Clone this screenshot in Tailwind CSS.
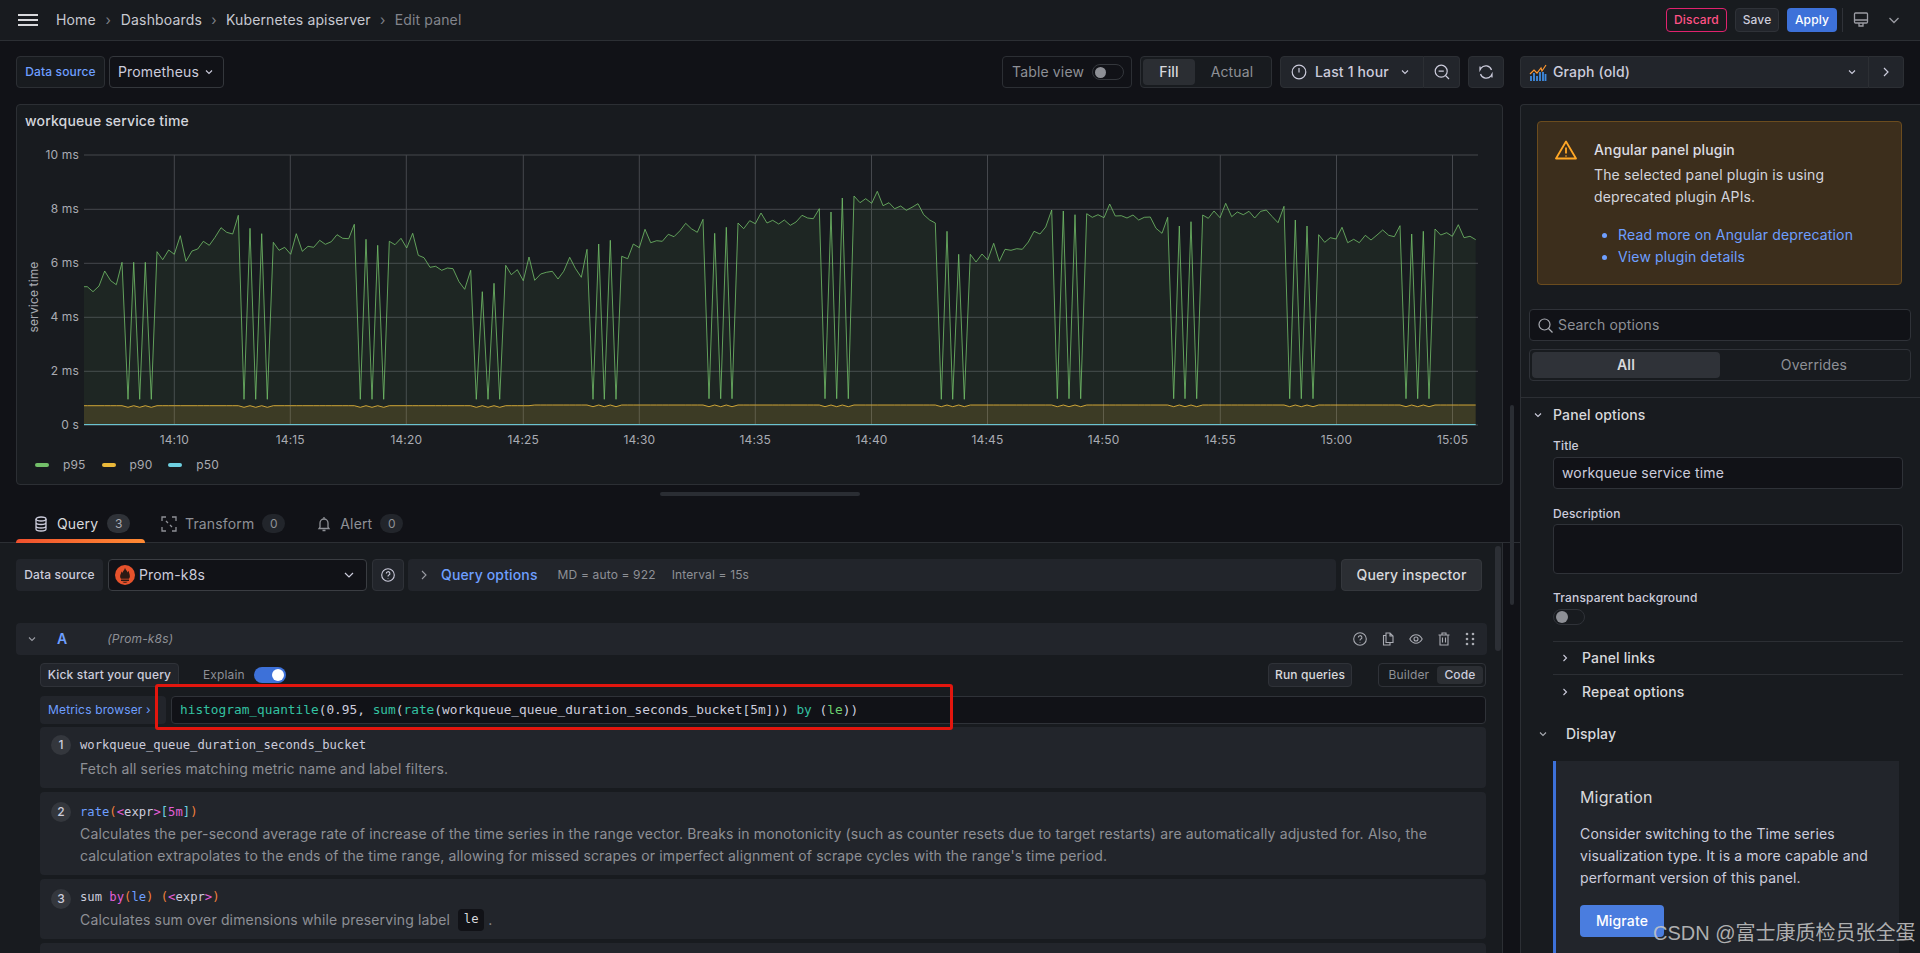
<!DOCTYPE html>
<html lang="en">
<head>
<meta charset="UTF-8">
<title>Edit panel - Grafana</title>
<script src="https://cdn.jsdelivr.net/npm/@tailwindcss/browser@4"></script>
</head>
<body class="w-[1920px] h-[953px] overflow-hidden bg-[#111217] text-[#ccccdc] text-sm tracking-[0.15px] font-['Inter',sans-serif] relative">

<!-- top bar -->
<header class="h-[41px] bg-[#181b1f] border-b border-[#2c2f34] flex items-center">
  <svg class="ml-[18px] w-5 h-3" viewBox="0 0 20 12" fill="none" stroke="#d8d9dc" stroke-width="2"><path d="M0 1h20M0 6h20M0 11h20"/></svg>
  <nav class="ml-[18px] flex items-center text-[#c7c9d1]">
    <span>Home</span><span class="w-[25px] text-center text-[#7e8087]">›</span>
    <span>Dashboards</span><span class="w-6 text-center text-[#7e8087]">›</span>
    <span>Kubernetes apiserver</span><span class="w-6 text-center text-[#7e8087]">›</span>
    <span class="text-[#83858c]">Edit panel</span>
  </nav>
  <div class="ml-auto flex items-center text-xs font-medium">
    <button class="w-[61px] h-6 border border-[#e0226e] rounded-sm text-[#ff5286]">Discard</button>
    <button class="ml-2 w-11 h-6 bg-[#22252b] border border-[#2f3238] rounded-sm">Save</button>
    <button class="ml-2 w-[50px] h-6 bg-[#3d71d9] rounded-sm text-white">Apply</button>
    <div class="ml-[5px] w-px h-6 bg-[#2f3238]"></div>
    <svg class="ml-[10px] w-4 h-4" viewBox="0 0 16 16" fill="none" stroke="#9a9ca3" stroke-width="1.3"><rect x="1.5" y="1" width="13" height="10" rx="1"/><path d="M1.5 8h13M6 11v3h4v-3"/></svg>
    <svg class="ml-[19px] mr-5 w-3 h-3" viewBox="0 0 12 12" fill="none" stroke="#9a9ca3" stroke-width="1.3"><path d="M1.5 4l4.5 4.5L10.5 4"/></svg>
  </div>
</header>

<div class="flex h-[912px]">
  <!-- left column -->
  <main class="w-[1520px] shrink-0 relative">
    <!-- toolbar -->
    <div class="h-[63px] pl-4 pr-4 pt-[15px] flex items-start">
      <div class="w-[89px] h-8 bg-[#181b1f] border border-[#2c2f34] rounded-sm text-xs font-medium text-[#6e9fff] flex items-center justify-center">Data source</div>
      <div class="ml-1 w-[115px] h-8 bg-[#111217] border border-[#34373c] rounded-sm flex items-center pl-2 gap-[6px]">Prometheus
        <svg class="w-2 h-2" viewBox="0 0 8 8" fill="none" stroke="#ccccdc" stroke-width="1.1"><path d="M1 2.5l3 3 3-3"/></svg>
      </div>
      <div class="ml-auto w-[130px] h-8 border border-[#2c2f34] rounded-sm flex items-center pl-[9px] text-[#8e9096]">Table view
        <span class="ml-[8px] w-8 h-4 rounded-full border border-[#34373c] flex items-center pl-[2px]"><span class="w-[11px] h-[11px] rounded-full bg-[#8e9096]"></span></span>
      </div>
      <div class="ml-2 w-[132px] h-8 border border-[#2c2f34] rounded-sm p-[2px] flex bg-[#181b1f]">
        <span class="w-[52px] bg-[#2b2e33] rounded-sm flex items-center justify-center font-medium text-[#d8d9dc]">Fill</span>
        <span class="w-[74px] flex items-center justify-center text-[#8e9096]">Actual</span>
      </div>
      <div class="ml-2 w-[144px] h-8 bg-[#22252b] border border-[#2c2f34] rounded-l-sm flex items-center pl-[10px] font-medium">
        <svg class="w-4 h-4" viewBox="0 0 16 16" fill="none" stroke="#ccccdc" stroke-width="1.2"><circle cx="8" cy="8" r="6.8"/><path d="M8 4v4.5"/></svg>
        <span class="ml-[8px]">Last 1 hour</span>
        <svg class="ml-[12px] w-2 h-2" viewBox="0 0 8 8" fill="none" stroke="#ccccdc" stroke-width="1.1"><path d="M1 2.5l3 3 3-3"/></svg>
      </div>
      <div class="w-9 h-8 bg-[#22252b] border border-l-0 border-[#2c2f34] rounded-r-sm flex items-center justify-center">
        <svg class="w-4 h-4" viewBox="0 0 16 16" fill="none" stroke="#ccccdc" stroke-width="1.2"><circle cx="7.2" cy="7.2" r="6"/><path d="M4.6 7.2h5.2M11.5 11.5l3.5 3.5"/></svg>
      </div>
      <div class="ml-2 w-9 h-8 bg-[#22252b] border border-[#2c2f34] rounded-sm flex items-center justify-center">
        <svg class="w-4 h-4" viewBox="0 0 16 16" fill="none" stroke="#ccccdc" stroke-width="1.2"><path d="M13.5 6A6 6 0 0 0 3 4.2L2 6V2.5M2.5 10A6 6 0 0 0 13 11.8l1-1.8v3.5"/></svg>
      </div>
    </div>

    <!-- graph panel -->
    <section class="ml-4 mr-[17px] h-[381px] bg-[#181b1f] border border-[#2c2f34] rounded-sm flex flex-col">
      <h2 class="h-[33px] pl-2 pt-[6px] font-medium text-[#d3d5dc]">workqueue service time</h2>
      <svg id="chart" class="w-[1485px] h-[318px] shrink-0" viewBox="17 138 1485 318" font-size="12" fill="#a9abb2"></svg>
      <div class="-mt-[3px] flex items-center h-6 pl-[18px] text-xs text-[#a9abb2]">
        <span class="w-[14px] h-1 rounded-full bg-[#73bf69]"></span><span class="ml-[14px] mr-4">p95</span>
        <span class="w-[14px] h-1 rounded-full bg-[#eab839]"></span><span class="ml-[14px] mr-4">p90</span>
        <span class="w-[14px] h-1 rounded-full bg-[#6ed0e0]"></span><span class="ml-[14px]">p50</span>
      </div>
    </section>

    <!-- splitter -->
    <div class="ml-[660px] mt-[7px] w-[200px] h-1 rounded-full bg-[#2a2d33]"></div>

    <!-- tabs -->
    <div class="mt-[9px] h-[38px] pl-4 flex items-stretch border-b border-[#2c2f34]">
      <div class="w-[129px] pl-[18px] flex items-center relative">
        <svg class="w-[14px] h-4" viewBox="0 0 14 16" fill="none" stroke="#ccccdc" stroke-width="1.3"><ellipse cx="7" cy="3" rx="5" ry="2"/><path d="M2 3v10c0 1 2.2 2 5 2s5-1 5-2V3M2 6.5c0 1 2.2 2 5 2s5-1 5-2M2 10c0 1 2.2 2 5 2s5-1 5-2"/></svg>
        <span class="ml-[9px] text-[#d8d9dc]">Query</span>
        <span class="ml-[9px] w-[23px] h-[19px] rounded-full bg-[#2f3238] text-xs flex items-center justify-center text-[#a9abb2]">3</span>
        <span class="absolute left-0 right-0 -bottom-px h-1 rounded-t-sm bg-gradient-to-r from-[#f0502e] to-[#ff8a33]"></span>
      </div>
      <div class="ml-4 flex items-center text-[#8e9096]">
        <svg class="w-4 h-4" viewBox="0 0 16 16" fill="none" stroke="#8e9096" stroke-width="1.3"><path d="M1 5V1h4M11 1h4v4M15 11v4h-4M5 15H1v-4M5 5l2 2M11 11L9 9"/></svg>
        <span class="ml-2">Transform</span>
        <span class="ml-2 w-[23px] h-[19px] rounded-full bg-[#22252b] text-xs flex items-center justify-center">0</span>
      </div>
      <div class="ml-8 flex items-center text-[#8e9096]">
        <svg class="w-[14px] h-4" viewBox="0 0 14 16" fill="none" stroke="#8e9096" stroke-width="1.3"><path d="M3 11V7a4 4 0 0 1 8 0v4l1 1.5H2zM5.5 14.5h3M7 1v2"/></svg>
        <span class="ml-[9px]">Alert</span>
        <span class="ml-2 w-[23px] h-[19px] rounded-full bg-[#22252b] text-xs flex items-center justify-center">0</span>
      </div>
    </div>

    <!-- query editor -->
    <section class="mr-[17px] h-[420px] bg-[#181b1f] border-r border-[#2c2f34] pl-4 pr-4 overflow-hidden relative">
      <div class="mt-4 h-8 flex">
        <div class="w-[87px] bg-[#22252b] rounded-sm text-xs font-medium flex items-center justify-center">Data source</div>
        <div class="ml-[5px] w-[259px] bg-[#111217] border border-[#3a3d42] rounded-sm flex items-center pl-[6px]">
          <svg class="w-5 h-5" viewBox="0 0 18 18"><circle cx="9" cy="9" r="9" fill="#e6522c"/><path d="M9 2.500c.4 2 2 2.600 2.400 4.200.2-.6.5-.9 1-1.200 0 1.800 1 2.800 1 4.800 0 .9-.4 1.500-.8 2H5.400c-.5-.6-.8-1.200-.8-2 0-1.900 1.100-2.600 1.200-4.400.5.300.8.700 1 1.200C7 5.300 8.700 4.500 9 2.500zM5.400 13h7.200v1.300H5.400zM6.700 15h4.600c-.5.700-1.300 1-2.300 1s-1.800-.3-2.300-1z" fill="#2c1a14"/></svg>
          <span class="ml-[4px]">Prom-k8s</span>
          <svg class="ml-auto mr-3 w-[10px] h-[10px]" viewBox="0 0 10 10" fill="none" stroke="#ccccdc" stroke-width="1.2"><path d="M1 3l4 4 4-4"/></svg>
        </div>
        <div class="ml-[5px] w-8 bg-[#22252b] border border-[#2f3238] rounded-sm flex items-center justify-center">
          <svg class="w-[14px] h-[14px]" viewBox="0 0 14 14" fill="none" stroke="#ccccdc" stroke-width="1.1"><circle cx="7" cy="7" r="6.300"/><path d="M5.300 5.500a1.800 1.800 0 1 1 2.600 1.600c-.6.300-.9.700-.9 1.300M7 10.200v.6"/></svg>
        </div>
        <div class="ml-1 w-[928px] bg-[#22252b] rounded-sm flex items-center pl-3 text-xs text-[#8e9096]">
          <svg class="w-2 h-[10px]" viewBox="0 0 8 10" fill="none" stroke="#9a9ca3" stroke-width="1.1"><path d="M2 1l4 4-4 4"/></svg>
          <span class="ml-[13px] text-sm font-medium text-[#6e9fff]">Query options</span>
          <span class="ml-5">MD = auto = 922</span>
          <span class="ml-4">Interval = 15s</span>
        </div>
        <button class="ml-[5px] w-[141px] bg-[#2b2e33] border border-[#34373c] rounded-sm font-medium text-[#d8d9dc]">Query inspector</button>
      </div>

      <div class="mt-8 h-8 w-[1471px] bg-[#22252b] rounded-sm flex items-center">
        <svg class="ml-3 w-2 h-2" viewBox="0 0 8 8" fill="none" stroke="#9a9ca3" stroke-width="1.1"><path d="M1 2.500l3 3 3-3"/></svg>
        <span class="ml-[21px] font-semibold text-[#6e9fff]">A</span>
        <span class="ml-[40px] text-xs italic text-[#8e9096]">(Prom-k8s)</span>
        <div class="ml-auto mr-3 flex items-center gap-[14px]">
          <svg class="w-[14px] h-[14px]" viewBox="0 0 14 14" fill="none" stroke="#a9abb2" stroke-width="1.100"><circle cx="7" cy="7" r="6.300"/><path d="M5.300 5.500a1.800 1.800 0 1 1 2.600 1.600c-.6.300-.9.700-.9 1.300M7 10.200v.6"/></svg>
          <svg class="w-[14px] h-[14px]" viewBox="0 0 14 14" fill="none" stroke="#a9abb2" stroke-width="1.100"><path d="M5 1h4l3 3v6.500H5zM9 1v3h3M5 3.500H2.500V13H9v-2.500"/></svg>
          <svg class="w-[14px] h-[14px]" viewBox="0 0 14 14" fill="none" stroke="#a9abb2" stroke-width="1.100"><path d="M.8 7C2.500 4 4.500 2.800 7 2.800S11.500 4 13.200 7c-1.700 3-3.700 4.200-6.200 4.200S2.500 10 .8 7z"/><circle cx="7" cy="7" r="2"/></svg>
          <svg class="w-[14px] h-[14px]" viewBox="0 0 14 14" fill="none" stroke="#a9abb2" stroke-width="1.100"><path d="M1.500 3h11M5 3V1h4v2M3 3v10h8V3M5.500 5.500v5M8.500 5.500v5"/></svg>
          <svg class="w-[10px] h-[14px]" viewBox="0 0 10 14" fill="#a9abb2"><circle cx="2" cy="2" r="1.300"/><circle cx="8" cy="2" r="1.300"/><circle cx="2" cy="7" r="1.300"/><circle cx="8" cy="7" r="1.300"/><circle cx="2" cy="12" r="1.300"/><circle cx="8" cy="12" r="1.300"/></svg>
        </div>
      </div>

      <div class="mt-2 ml-6 w-[1446px] h-6 flex items-center text-xs">
        <button class="w-[139px] h-6 bg-[#22252b] border border-[#2f3238] rounded-sm font-medium">Kick start your query</button>
        <span class="ml-6 text-[#8e9096]">Explain</span>
        <span class="ml-[9px] w-8 h-4 rounded-full bg-[#3d71d9] flex items-center justify-end pr-[2px]"><span class="w-3 h-3 rounded-full bg-white"></span></span>
        <button class="ml-auto w-[84px] h-6 bg-[#22252b] border border-[#2f3238] rounded-sm font-medium text-[#d8d9dc]">Run queries</button>
        <div class="ml-[26px] w-[108px] h-6 border border-[#2f3238] rounded-sm flex items-center p-[2px]">
          <span class="w-[57px] text-center text-[#8e9096]">Builder</span>
          <span class="w-[47px] h-[18px] bg-[#2b2e33] rounded-sm font-medium flex items-center justify-center">Code</span>
        </div>
      </div>

      <div class="mt-[9px] ml-6 w-[1446px] h-[28px] flex">
        <div class="w-[126px] bg-[#22252b] rounded-sm text-xs text-[#6e9fff] flex items-center pl-2">Metrics browser ›</div>
        <div class="ml-[5px] flex-1 bg-[#111217] border border-[#2f3238] rounded-sm flex items-center pl-2 font-['DejaVu_Sans_Mono',monospace] text-[12.8px] tracking-normal whitespace-pre text-[#ccccdc]"><span class="text-[#33c1a1]">histogram_quantile</span>(0.95, <span class="text-[#33c1a1]">sum</span>(<span class="text-[#33c1a1]">rate</span>(workqueue_queue_duration_seconds_bucket[5m])) <span class="text-[#33c1a1]">by</span> (<span class="text-[#6ccf6e]">le</span>))</div>
      </div>

      <div class="mt-[3px] ml-6 w-[1446px] h-[61px] bg-[#22252b] rounded-sm flex pl-[11px] pt-2">
        <span class="w-[20px] h-[20px] rounded-full bg-[#34373d] text-xs font-medium flex items-center justify-center">1</span>
        <div class="ml-[9px]">
          <div class="h-5 font-['DejaVu_Sans_Mono',monospace] text-[12.2px] tracking-normal leading-5">workqueue_queue_duration_seconds_bucket</div>
          <p class="mt-[3px] leading-[22px] text-[#8e9096]">Fetch all series matching metric name and label filters.</p>
        </div>
      </div>

      <div class="mt-1 ml-6 w-[1446px] h-[83px] bg-[#22252b] rounded-sm flex pl-[11px] pt-[10px]">
        <span class="w-[20px] h-[20px] rounded-full bg-[#34373d] text-xs font-medium flex items-center justify-center">2</span>
        <div class="ml-[9px]">
          <div class="h-5 font-['DejaVu_Sans_Mono',monospace] text-[12.2px] tracking-normal leading-5"><span class="text-[#6e9fff]">rate</span><span class="text-[#f2803c]">(</span><span class="text-[#e35fd8]">&lt;</span>expr<span class="text-[#e35fd8]">&gt;</span><span class="text-[#6ed0e0]">[</span><span class="text-[#e35fd8]">5m</span><span class="text-[#6ed0e0]">]</span><span class="text-[#f2803c]">)</span></div>
          <p class="mt-[1px] w-[1370px] leading-[22px] text-[#8e9096]">Calculates the per-second average rate of increase of the time series in the range vector. Breaks in monotonicity (such as counter resets due to target restarts) are automatically adjusted for. Also, the calculation extrapolates to the ends of the time range, allowing for missed scrapes or imperfect alignment of scrape cycles with the range's time period.</p>
        </div>
      </div>

      <div class="mt-1 ml-6 w-[1446px] h-[60px] bg-[#22252b] rounded-sm flex pl-[11px] pt-[10px]">
        <span class="w-[20px] h-[20px] rounded-full bg-[#34373d] text-xs font-medium flex items-center justify-center">3</span>
        <div class="ml-[9px]">
          <div class="h-4 font-['DejaVu_Sans_Mono',monospace] text-[12.2px] tracking-normal leading-4 whitespace-pre">sum <span class="text-[#e35fd8]">by</span><span class="text-[#f2803c]">(</span><span class="text-[#6e9fff]">le</span><span class="text-[#f2803c]">)</span> <span class="text-[#f2803c]">(</span><span class="text-[#e35fd8]">&lt;</span>expr<span class="text-[#e35fd8]">&gt;</span><span class="text-[#f2803c]">)</span></div>
          <p class="mt-[4px] flex items-center h-[22px] text-[#8e9096]">Calculates sum over dimensions while preserving label
            <code class="ml-2 mr-1 w-[26px] h-[22px] bg-[#111217] rounded-sm text-[#d8d9dc] text-[12.2px] tracking-normal font-['DejaVu_Sans_Mono',monospace] flex items-center justify-center">le</code>.</p>
        </div>
      </div>

      <div class="mt-1 ml-6 w-[1446px] h-12 bg-[#22252b] rounded-sm"></div>

      <!-- inner scrollbar -->
      <div class="absolute right-[1px] top-[3px] w-[6px] h-[105px] rounded-full bg-[#2c2f35]"></div>
    </section>

    <!-- page scrollbar -->
    <div class="absolute left-[1510px] top-[364px] w-1 h-[200px] rounded-full bg-[#2a2d33]"></div>
  </main>

  <!-- options pane -->
  <aside class="flex-1 min-w-0">
    <div class="h-[63px] pt-[15px] flex items-start">
      <div class="w-[349px] h-8 bg-[#22252b] border border-[#2c2f34] rounded-l-sm flex items-center pl-2 font-medium">
        <svg class="w-[18px] h-[18px]" viewBox="0 0 18 18" fill="none"><path d="M1 11l4-4 3 3 4-5 1 3 4-6" stroke="#ff9830" stroke-width="1.200"/><path d="M2 18v-5M5 18v-8M8 18v-5M11 18v-9M14 18V9M16.500 18v-7" stroke="#3f8ce0" stroke-width="1.800"/></svg>
        <span class="ml-[6px]">Graph (old)</span>
        <svg class="ml-auto mr-3 w-2 h-2" viewBox="0 0 8 8" fill="none" stroke="#ccccdc" stroke-width="1.100"><path d="M1 2.500l3 3 3-3"/></svg>
      </div>
      <div class="w-[35px] h-8 bg-[#22252b] border border-l-0 border-[#2c2f34] rounded-r-sm flex items-center justify-center">
        <svg class="w-2 h-[10px]" viewBox="0 0 8 10" fill="none" stroke="#ccccdc" stroke-width="1.200"><path d="M2 1l4 4-4 4"/></svg>
      </div>
    </div>

    <div class="h-[849px] bg-[#181b1f] border-l border-t border-[#2c2f34] rounded-tl-sm overflow-hidden">
      <div class="ml-4 mt-4 w-[365px] h-[164px] bg-[#3c2e1c] border border-[#6b4c1e] rounded-sm flex pl-[17px] pt-[17px]">
        <svg class="w-[22px] h-5 shrink-0 mt-[1px]" viewBox="0 0 22 20" fill="none" stroke="#ffa726" stroke-width="1.800" stroke-linejoin="round"><path d="M11 1.500L1 18.500h20zM11 7.500v6M11 15.500v1"/></svg>
        <div class="ml-[17px] leading-[22px]">
          <h3 class="font-medium text-[#dcdde3]">Angular panel plugin</h3>
          <p class="mt-[3px] w-[240px] text-[#d3d5dc]">The selected panel plugin is using deprecated plugin APIs.</p>
          <ul class="mt-[16px] ml-[24px] list-disc text-[#6e9fff]">
            <li>Read more on Angular deprecation</li>
            <li>View plugin details</li>
          </ul>
        </div>
      </div>

      <div class="ml-2 mt-6 w-[382px] h-8 bg-[#111217] border border-[#2f3238] rounded-sm flex items-center pl-2">
        <svg class="w-[15px] h-[15px]" viewBox="0 0 15 15" fill="none" stroke="#a9abb2" stroke-width="1.200"><circle cx="6.500" cy="6.500" r="5.500"/><path d="M10.500 10.500l4 4"/></svg>
        <span class="ml-[5px] text-[#8e9096]">Search options</span>
      </div>
      <div class="ml-2 mt-2 w-[382px] h-8 border border-[#2f3238] rounded-sm p-[2px] flex">
        <span class="w-[188px] bg-[#2f3238] rounded-sm font-semibold text-[#d8d9dc] flex items-center justify-center">All</span>
        <span class="flex-1 flex items-center justify-center text-[#8e9096]">Overrides</span>
      </div>

      <div class="mt-4 border-t border-[#2c2f34]">
        <div class="h-[34px] flex items-center pl-[13px]">
          <svg class="w-2 h-2" viewBox="0 0 8 8" fill="none" stroke="#ccccdc" stroke-width="1.100"><path d="M1 2.500l3 3 3-3"/></svg>
          <span class="ml-[11px] font-medium text-[#d8d9dc]">Panel options</span>
        </div>
        <div class="ml-8 w-[350px] text-xs font-medium text-[#ccccdc]">
          <label class="block h-6 leading-[28px]">Title</label>
          <div class="mt-[1px] h-8 bg-[#111217] border border-[#2f3238] rounded-sm flex items-center pl-[8px] text-sm font-normal">workqueue service time</div>
          <label class="block mt-4 h-5 leading-[17px]">Description</label>
          <div class="-mt-[1px] h-[50px] bg-[#111217] border border-[#2f3238] rounded-sm"></div>
          <label class="block mt-[16px] h-[19px] leading-4">Transparent background</label>
          <span class="flex w-8 h-4 rounded-full border border-[#2f3238] items-center pl-[2px]"><span class="w-[12px] h-[12px] rounded-full bg-[#8e9096]"></span></span>
          <div class="mt-4 border-t border-[#2c2f34] h-[33px] flex items-center pl-2 text-sm text-[#d8d9dc]">
            <svg class="w-2 h-2" viewBox="0 0 8 8" fill="none" stroke="#ccccdc" stroke-width="1.100"><path d="M2.500 1l3 3-3 3"/></svg>
            <span class="ml-[13px]">Panel links</span>
          </div>
          <div class="border-t border-[#2c2f34] h-[35px] flex items-center pl-2 text-sm text-[#d8d9dc]">
            <svg class="w-2 h-2" viewBox="0 0 8 8" fill="none" stroke="#ccccdc" stroke-width="1.100"><path d="M2.500 1l3 3-3 3"/></svg>
            <span class="ml-[13px]">Repeat options</span>
          </div>
        </div>
        <div class="mt-[8px] h-[34px] flex items-center pl-[18px]">
          <svg class="w-2 h-2" viewBox="0 0 8 8" fill="none" stroke="#a9abb2" stroke-width="1.100"><path d="M1 2.500l3 3 3-3"/></svg>
          <span class="ml-[19px] font-medium text-[#d8d9dc]">Display</span>
        </div>
        <div class="ml-8 mt-[10px] w-[346px] h-[220px] bg-[#22252b] border-l-[3px] border-[#3d71d9] pl-6 pt-6">
          <h4 class="text-base leading-6 text-[#d8d9dc]">Migration</h4>
          <p class="mt-[14px] w-[300px] leading-[22px] text-[#ccccdc]">Consider switching to the Time series visualization type. It is a more capable and performant version of this panel.</p>
          <button class="mt-4 w-[84px] h-8 bg-[#4a7ddf] rounded-sm font-medium text-white">Migrate</button>
        </div>
      </div>
    </div>
  </aside>
</div>

<!-- annotation drawn over the screenshot -->
<div class="absolute left-[155px] top-[684px] w-[798px] h-[46px] border-[3px] border-[#e3160e] rounded-[3px]"></div>
<!-- watermark -->
<div class="absolute left-[1653px] top-[919px] text-[20px] leading-7 tracking-normal whitespace-nowrap text-[#c9c9c9]/85 font-['Liberation_Sans','Noto_Sans_CJK_SC',sans-serif]">CSDN @富士康质检员张全蛋</div>

<script>
  // series traced off the chart, x/y at 3x, one chunk per crop
  const chunks = [
    [0, '252,470 262,470 279,485 297,468 314,423 332,452 349,464 366,397 384,808 401,397 419,808 436,397 454,808 471,365 488,389 506,360 523,373 541,317 558,394 576,363 593,357 610,334 628,346 645,322 663,293 680,307 698,312 715,256 732,808 750,295 767,808 785,311 802,808 820,337 837,361 854,352 872,373 889,311 907,364 924,349 941,352 959,331 976,343 994,335 1011,314 1028,325 1046,326 1063,283 1081,808 1098,328 1116,808 1133,346 1151,808 1168,334 1185,344 1203,325 1220,354 1238,310 1255,376 1272,383 1290,412 1307,409 1325,421 1342,414 1359,416 1377,455 1394,478 1412,421 1429,808 1447,485 1464,808 1482,460 1499,808'],
    [1500, '17,406 34,434 52,419 70,452 87,381 104,451 122,432 139,427 157,424 174,447 191,424 209,382 226,415 244,442 261,358 279,808 296,342 313,808 331,331 348,808 365,379 383,386 400,342 418,353 435,298 452,338 470,332 487,334 505,313 522,320 540,302 557,280 574,296 592,307 609,268 627,806 644,310 662,806 679,292 696,806 714,279 731,296 749,272 766,281 783,249 801,279 818,271 836,282 853,270 871,286 888,276 906,256 923,264 940,266 958,236 975,806 993,246 1010,806 1027,204 1045,806 1062,198 1080,218 1097,206 1115,220 1132,184 1149,227 1167,218 1184,236 1202,228 1219,241 1236,232 1254,221 1271,254 1289,270 1306,279 1324,808 1341,304 1358,808 1376,373 1393,808 1411,373 1428,396 1446,372 1463,390 1481,340 1498,394 1515,358 1533,361'],
    [3000, '50,356 67,358 85,336 102,304 120,312 137,291 155,240 172,806 190,243 207,806 225,254 242,806 260,251 277,262 294,254 312,263 329,222 346,258 364,257 381,264 399,255 416,270 433,262 451,261 468,295 486,310 503,262 521,806 538,288 555,806 573,275 590,806 608,255 625,265 642,243 660,263 677,220 695,260 712,246 730,254 747,244 764,264 782,244 799,240 817,260 834,278 852,229 869,806 886,270 904,806 921,288 939,806 956,314 974,337 991,323 1008,327 1026,292 1043,338 1061,328 1078,338 1096,316 1113,330 1131,315 1148,300 1166,316 1183,320 1200,287 1218,806 1235,312 1253,806 1270,304 1287,806 1305,297 1322,315 1340,308 1357,319 1375,284 1392,323 1410,319 1427,329']
  ];
  const pts = [];
  chunks.forEach(([off, s]) => s.split(' ').forEach(p => {
    const [x, y] = p.split(',').map(Number);
    pts.push([(x + off) / 3, 130 + y / 3, y]);
  }));
  const f = n => n.toFixed(1);
  const green = pts.map(p => f(p[0]) + ',' + f(p[1])).join(' ');
  // the p90 line dips a little wherever p95 drops
  const yellow = pts.map((p, i) => {
    const base = p[0] < 530 ? 827 : 825;
    return f(p[0]) + ',' + f(130 + (p[2] > 800 ? base + 5 : base) / 3);
  }).join(' ');
  const x0 = 84, x1 = pts[pts.length - 1][0];

  let svg = '';
  [[155, '10 ms'], [209.3, '8 ms'], [263.3, '6 ms'], [317.3, '4 ms'], [371.3, '2 ms'], [425, '0 s']].forEach(([y, t]) => {
    svg += `<path d="M84 ${y}H1478" stroke="#45484d"/><text x="79" y="${y + 4}" text-anchor="end">${t}</text>`;
  });
  [[174.3, '14:10'], [290.3, '14:15'], [406.3, '14:20'], [523.3, '14:25'], [639.3, '14:30'], [755.3, '14:35'], [871.5, '14:40'], [987.5, '14:45'], [1103.5, '14:50'], [1220.3, '14:55'], [1336.5, '15:00'], [1452.5, '15:05']].forEach(([x, t]) => {
    svg += `<path d="M${x} 155V425" stroke="#45484d"/><text x="${x}" y="444" text-anchor="middle">${t}</text>`;
  });
  svg += `<text transform="translate(38 297) rotate(-90)" text-anchor="middle" font-size="12">service time</text>`;
  svg += `<polygon points="${x0},425 ${green} ${f(x1)},425" fill="#73bf69" fill-opacity="0.07"/>`;
  svg += `<polygon points="${x0},425 ${yellow} ${f(x1)},425" fill="#eab839" fill-opacity="0.15"/>`;
  svg += `<polyline points="${green}" fill="none" stroke="#73bf69" stroke-opacity="0.8"/>`;
  svg += `<polyline points="${yellow}" fill="none" stroke="#eab839" stroke-opacity="0.85"/>`;
  svg += `<path d="M${x0} 424.600H${f(x1)}" stroke="#6ed0e0"/>`;
  document.getElementById('chart').innerHTML = svg;
</script>
</body>
</html>
